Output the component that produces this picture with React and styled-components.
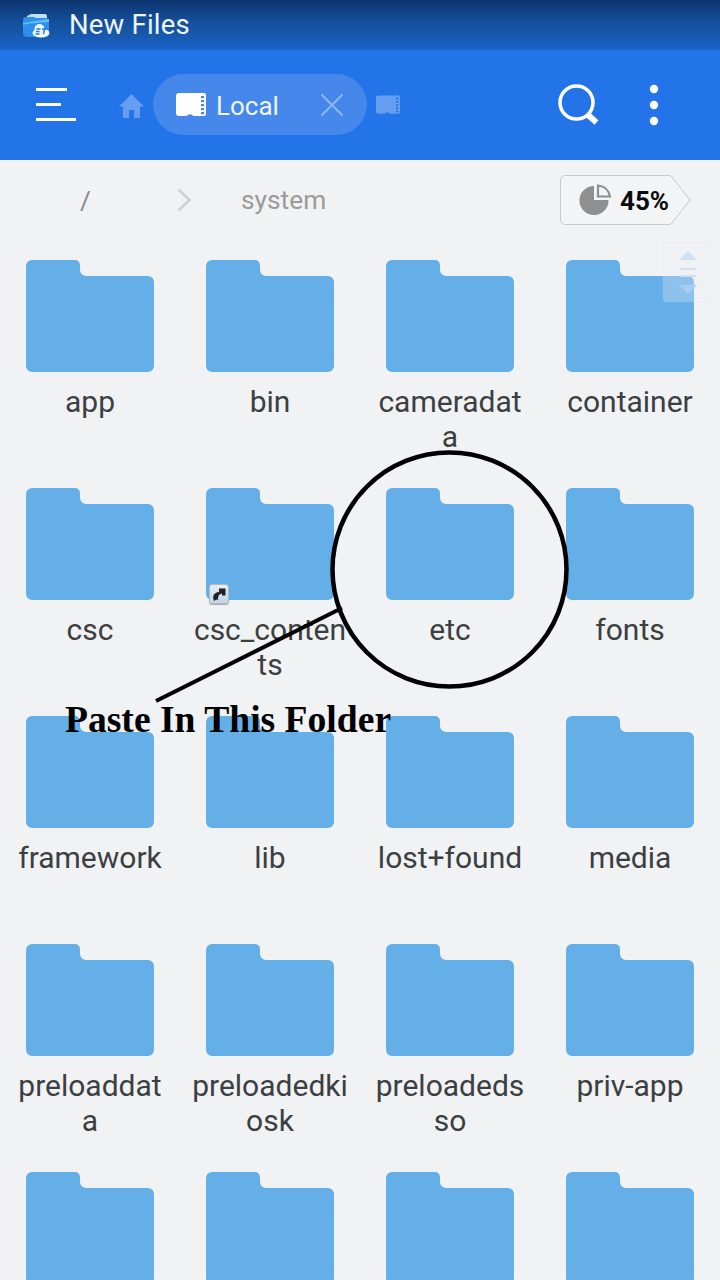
import React from "react";
import styled, { createGlobalStyle } from "styled-components";

const Global = createGlobalStyle`
  html, body { margin: 0; padding: 0; background: #f1f2f4; }
  body { font-family: Roboto, "Liberation Sans", sans-serif; }
`;
const Screen = styled.div`
  position: relative; width: 720px; height: 1280px; overflow: hidden; background: #f1f2f4;
`;
const StatusBar = styled.header`
  height: 50px; display: flex; align-items: center; padding-left: 22px; gap: 20px;
  background: linear-gradient(180deg, #0d3570 0%, #145099 45%, #1a63c8 100%);
`;
const StatusTitle = styled.span`
  font-size: 27.5px; color: #eef4fc; line-height: 50px; letter-spacing: 0.2px; margin-left: -1px;
`;
const Toolbar = styled.nav`
  height: 110px; background: #2374e8; display: flex; align-items: center; padding-left: 36px; position: relative;
`;
const HomeSlot = styled.span`
  display: flex; margin-left: 43px; margin-top: 2px; width: 34px;
`;
const Pill = styled.div`
  width: 214px; height: 61px; margin-top: -1px; box-sizing: border-box; border-radius: 31px; background: #4587ea;
  display: flex; align-items: center; padding-left: 23px; color: #f0f6fe; font-size: 26px;
`;
const PillLabel = styled.span` margin-left: 10px; width: 104px; margin-top: 2px; `;
const NextSlot = styled.span` display: flex; margin-left: 9px; `;
const Actions = styled.div`
  margin-left: auto; display: flex; align-items: center; gap: 49px; padding-right: 61px;
`;
const Crumbs = styled.div`
  height: 80px; display: flex; align-items: center; position: relative; color: #9a9a9a; font-size: 26.3px;
`;
const Slash = styled.span` margin-left: 80px; width: 97px; margin-top: -1px; color: #8a8a8a; `;
const SystemLabel = styled.span` margin-left: 49px; margin-top: 0; `;
const Usage = styled.div`
  position: absolute; left: 560px; top: 15px; width: 130px; height: 50px;
`;
const UsageText = styled.span`
  position: absolute; left: 60px; top: 10px; font-size: 26px; line-height: 33px; font-weight: 700; color: #0b0b0b;
`;
const Grid = styled.main`
  display: grid; grid-template-columns: repeat(4, 180px); grid-auto-rows: 228px; padding-top: 20px;
`;
const Cell = styled.div`
  position: relative; display: flex; flex-direction: column; align-items: center;
`;
const Name = styled.div`
  width: 170px; margin-top: 12px; text-align: center; font-size: 30px; line-height: 35px; color: #3c3f42;
`;
const Shortcut = styled.span`
  position: absolute; left: 29px; top: 96px;
  width: 20px; height: 20px; box-sizing: border-box; border-radius: 3px; border: 1px solid #b4b8bd;
  background: linear-gradient(#e8ecf0, #bcd6ec); display: flex; align-items: center; justify-content: center;
  box-shadow: 0 1px 1px #a4aab0;
`;
const Scroller = styled.div`
  position: absolute; left: 663px; top: 243px; width: 49px; height: 59px; border-radius: 4px;
  background: rgba(234, 240, 247, 0.3); box-shadow: 0 0 1px rgba(200,210,225,.5);
  display: flex; align-items: center; justify-content: center;
`;
const Annotation = styled.svg`
  position: absolute; left: 0; top: 0; pointer-events: none;
`;
const Note = styled.div`
  position: absolute; left: 65px; top: 698px; font-family: "Liberation Serif", serif; font-weight: 700;
  font-size: 37.6px; line-height: 44px; color: #000; white-space: nowrap;
`;

const Folder = () => (
  <svg width="128" height="112" viewBox="0 0 128 112" style={{ display: "block" }}>
    <path d="M6 0H49a5 5 0 0 1 5 5V10a6 6 0 0 0 6 6H122a6 6 0 0 1 6 6V106a6 6 0 0 1-6 6H6a6 6 0 0 1-6-6V6a6 6 0 0 1 6-6Z" fill="#65afe9" />
  </svg>
);
const Sd = ({ color, hole, w = 30, h = 24 }) => (
  <svg width={w} height={h} viewBox="0 0 30 24">
    <path d="M3 0H28a2 2 0 0 1 2 2V21a2 2 0 0 1-2 2H17l-1-1.500H12l-1 1.500H3a3 3 0 0 1-3-3V3a3 3 0 0 1 3-3Z" fill={color} />
    {[3, 7, 11, 15, 19].map((y) => <rect key={y} x="25" y={y} width="3" height="2.200" fill={hole} />)}
  </svg>
);
const AppLogo = () => (
  <svg width="28" height="25" viewBox="0 0 28 25">
    <path d="M5 3 9 1H23a2 2 0 0 1 2 2V6H5Z" fill="#bfe0fa" />
    <path d="M4 4H12L14 5H24a3 3 0 0 1 3 3V20a4 4 0 0 1-4 4H5a4 4 0 0 1-4-4V7a3 3 0 0 1 3-3Z" fill="#2b8fec" />
    <path d="M1 10C8 9 18 7 27 6V9C18 10 8 10 1 12Z" fill="#63baf5" />
    <ellipse cx="19" cy="20" rx="8.500" ry="4.500" fill="#f4f9fe" />
    <circle cx="17.500" cy="16" r="5" fill="#f4f9fe" />
    <path d="M14.500 16h4M14 18.500h3.500M13.500 21h4M20 16h5M22.500 16l-1 5" stroke="#2178d8" strokeWidth="1.400" fill="none" />
  </svg>
);
const names = [
  "app", "bin", "cameradata", "container",
  "csc", "csc_contents", "etc", "fonts",
  "framework", "lib", "lost+found", "media",
  "preloaddata", "preloadedkiosk", "preloadedsso", "priv-app",
  "", "", "", "",
];
const wrapped = { cameradata: ["cameradat", "a"], csc_contents: ["csc_conten", "ts"], preloaddata: ["preloaddat", "a"], preloadedkiosk: ["preloadedki", "osk"], preloadedsso: ["preloadeds", "so"] };

export default function App() {
  return (
    <Screen>
      <Global />
      <StatusBar>
        <AppLogo />
        <StatusTitle>New Files</StatusTitle>
      </StatusBar>
      <Toolbar>
        <svg width="40" height="34" viewBox="0 0 40 34">
          <rect x="0" y="0" width="31" height="3" fill="#fff" />
          <rect x="0" y="15" width="25" height="3" fill="#fff" />
          <rect x="0" y="30" width="40" height="3" fill="#fff" />
        </svg>
        <HomeSlot>
          <svg width="25" height="24" viewBox="0 0 25 24">
            <path d="M12.500 0 25 12.500H21V24H15V16H10V24H4V12.500H0Z" fill="#669df0" />
          </svg>
        </HomeSlot>
        <Pill>
          <Sd color="#ffffff" hole="#4587ea" />
          <PillLabel>Local</PillLabel>
          <svg width="24" height="24" viewBox="0 0 24 24">
            <path d="M1.500 1.500 22.500 22.500M22.500 1.500 1.500 22.500" stroke="#8fb6f2" strokeWidth="1.800" fill="none" />
          </svg>
        </Pill>
        <NextSlot><Sd color="#669df0" hole="#2374e8" w={24} h={20} /></NextSlot>
        <Actions>
          <svg width="42" height="42" viewBox="0 0 42 42">
            <circle cx="18.500" cy="18.500" r="16.500" stroke="#fff" strokeWidth="3.500" fill="none" />
            <path d="M29.500 30.500 38.500 38.500" stroke="#fff" strokeWidth="6" fill="none" />
          </svg>
          <svg width="10" height="42" viewBox="0 0 10 42">
            <circle cx="5" cy="5" r="4.200" fill="#fff" />
            <circle cx="5" cy="21" r="4.200" fill="#fff" />
            <circle cx="5" cy="37" r="4.200" fill="#fff" />
          </svg>
        </Actions>
      </Toolbar>
      <Crumbs>
        <Slash>/</Slash>
        <svg width="15" height="24" viewBox="0 0 15 24">
          <path d="M1.500 1.500 12.500 12 1.500 22.500" stroke="#cfcfcf" strokeWidth="2.500" fill="none" />
        </svg>
        <SystemLabel>system</SystemLabel>
        <Usage>
          <svg width="130" height="50" viewBox="0 0 130 50">
            <path d="M5 .5H109a4 4 0 0 1 3 1.500L128.500 23a3 3 0 0 1 0 4L112 48a4 4 0 0 1-3 1.500H5a4.500 4.500 0 0 1-4.500-4.500V5A4.500 4.500 0 0 1 5 .5Z" fill="#f3f4f6" stroke="#c9c9c9" />
            <path d="M34 11V25H48.500A14.500 14.500 0 1 1 34 11Z" fill="#8f8f8f" />
            <path d="M38 10.500C44.500 11 49 15.500 50 21.500H38Z" fill="none" stroke="#8f8f8f" strokeWidth="2.200" />
          </svg>
          <UsageText>45%</UsageText>
        </Usage>
      </Crumbs>
      <Grid>
        {names.map((n, i) => (
          <Cell key={i}>
            <Folder />
            {n === "csc_contents" && (
              <Shortcut>
                <svg width="16" height="16" viewBox="0 0 16 16">
                  <path d="M3 15C1 10 3 6.500 8 6V2.500L14.500 2.500V9.500L11 9.500 11 7.500C8 8 6 11 7.500 14.500 5.500 12.500 5 14 3 15Z" fill="#222" />
                </svg>
              </Shortcut>
            )}
            {n && (
              <Name>
                {wrapped[n] ? <>{wrapped[n][0]}<br />{wrapped[n][1]}</> : n}
              </Name>
            )}
          </Cell>
        ))}
      </Grid>
      <Scroller>
        <svg width="18" height="44" viewBox="0 0 18 44">
          <path d="M9 0 18 9H0Z" fill="#cfe0f5" />
          <rect x="1" y="17" width="16" height="2" fill="#cfe0f5" />
          <rect x="1" y="24" width="16" height="2" fill="#cfe0f5" />
          <path d="M0 34H18L9 43Z" fill="#a9cdf2" />
        </svg>
      </Scroller>
      <Annotation width="720" height="1280" viewBox="0 0 720 1280">
        <circle cx="449.500" cy="569.500" r="117" fill="none" stroke="#000" strokeWidth="4.500" />
        <path d="M156 701 342 608" stroke="#000" strokeWidth="4" fill="none" />
      </Annotation>
      <Note>Paste In This Folder</Note>
    </Screen>
  );
}
